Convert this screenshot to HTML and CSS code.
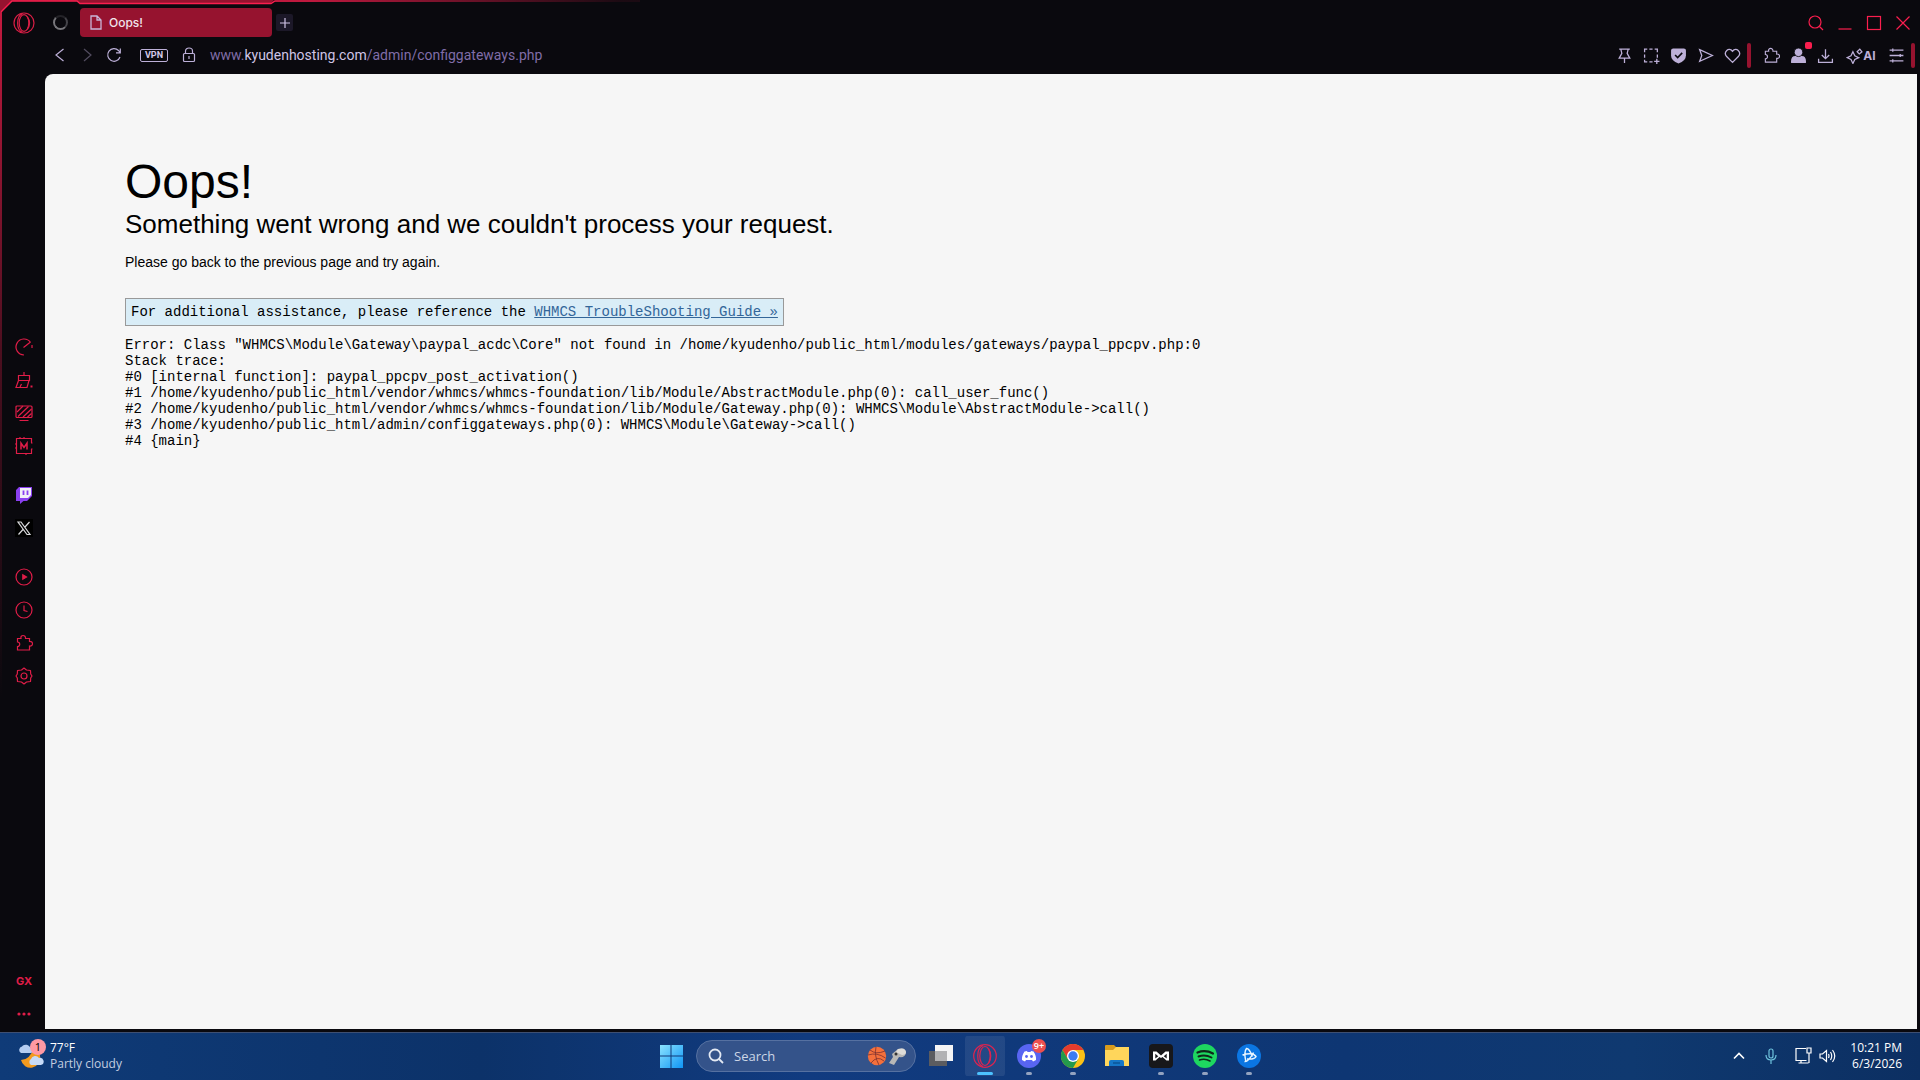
FILE: index.html
```
<!DOCTYPE html>
<html lang="en">
<head>
<meta charset="UTF-8">
<meta name="viewport" content="width=device-width, initial-scale=1.0">
<title>Oops!</title>
<link rel="stylesheet" href="styles.css">
</head>
<body>

<div class="browser">
    <!-- Glowing window edge -->
    <svg class="edge" viewBox="0 0 640 700" fill="none">
        <defs>
            <linearGradient id="edgeTop" gradientUnits="userSpaceOnUse" x1="0" y1="0" x2="620" y2="0">
                <stop offset="0.5" stop-color="#fa1e4e"/>
                <stop offset="1" stop-color="#fa1e4e" stop-opacity="0.1"/>
            </linearGradient>
            <linearGradient id="edgeSide" gradientUnits="userSpaceOnUse" x1="0" y1="0" x2="0" y2="700">
                <stop offset="0" stop-color="#c81a40"/>
                <stop offset="0.5" stop-color="#c81a40" stop-opacity="0.35"/>
                <stop offset="1" stop-color="#c81a40" stop-opacity="0"/>
            </linearGradient>
        </defs>
        <path d="M0 0H274L271 3H80L77 1H12L1 12H0Z" fill="#96132f"/>
        <path d="M1 12L12 1H77L80 3.5H271L275 1H640" stroke="url(#edgeTop)" stroke-width="1.4"/>
        <path d="M0 12H2V700H0Z" fill="url(#edgeSide)"/>
    </svg>

    <!-- Sidebar -->
    <nav class="sidebar">
        <button class="opera" aria-label="Opera menu">
            <svg width="22" height="22" viewBox="0 0 22 22" fill="none" stroke="#d81e45" stroke-width="1.2"><circle cx="11" cy="11" r="10"/><ellipse cx="11" cy="11" rx="4.8" ry="8.4"/><path d="M9.500 1.600C3 4 3 18 9.500 20.400M14.300 4.500c2.800 4 2.800 9 0 13"/></svg>
        </button>
        <div class="side-group">
            <button aria-label="GX Control">
                <svg viewBox="0 0 18 18"><path d="M9 17A8 8 0 1 1 15.500 4.300M17 7V10M8.500 9.500L15.500 4"/></svg>
            </button>
            <button aria-label="GX Cleaner">
                <svg viewBox="0 0 18 18"><path d="M9 1V4M3.500 4.500H14.500V9.500H3.500ZM3.500 9.500L1 16.500H12L14 9.500M5 16L6.500 13"/><path d="M15.500 15.500H17.500" stroke-width="2"/></svg>
            </button>
            <button aria-label="Live wallpaper">
                <svg viewBox="0 0 18 18"><rect x="1" y="2" width="16" height="11.500" rx="1"/><path d="M2 8L8 2M3 12.500L13.500 2.500M8 13L16.500 5M12.500 13L16.500 9.500M4.500 16.500H13.500"/></svg>
            </button>
            <button aria-label="GX Mods">
                <svg viewBox="0 0 18 18"><path d="M16.500 6V1.500H1.500V16.500H16.500V12M0 7H1.500M0 11H1.500M5 0V1.500M9 0V1.500M17.500 6H16M17.500 12H16M11 18V16.500"/><path d="M6 12.500V6.200L9 10.500L12 6.200V12.500" stroke-width="1.500"/></svg>
            </button>
        </div>
        <div class="side-group">
            <button aria-label="Twitch">
                <svg viewBox="0 0 18 18"><path d="M1 4L4 1H17V10L12 15H8.500L5 18V15H1Z" fill="#8a3ff0" stroke="none"/><path d="M5 2H16V9L13 12H5Z" fill="#f1eef8" stroke="none"/><path d="M8.500 4.500V9M12.500 4.500V9" stroke="#8a3ff0" stroke-width="1.800"/></svg>
            </button>
            <button class="x-app" aria-label="X">
                <svg viewBox="0 0 18 18"><path d="M3 3H6L15 15.500H12ZM14.500 3L10 8M8 10.500L3.500 15.500"/></svg>
            </button>
        </div>
        <div class="side-group">
            <button aria-label="Player">
                <svg viewBox="0 0 18 18"><circle cx="9" cy="9" r="8"/><path d="M7.800 6.800L11.500 9L7.800 11.200Z" fill="#e01d48"/></svg>
            </button>
            <button aria-label="History">
                <svg viewBox="0 0 18 18"><circle cx="9" cy="9" r="8"/><path d="M9 4.500V9.500L12.500 10.500"/></svg>
            </button>
            <button aria-label="Extensions">
                <svg viewBox="0 0 18 18"><path d="M2.500 4.500H6C5 0.500 11 0.500 10.500 4.500H14.500V7.500C18.500 7 18.500 12.500 14.500 12V16H2.500V12.500C5.500 12.500 5.500 8 2.500 8Z"/></svg>
            </button>
            <button aria-label="Settings">
                <svg viewBox="0 0 18 18"><path d="M9 1L11.500 3L15.500 3.500L15.700 7L17 9L15.700 11L15.500 14.500L11.500 15L9 17L6.500 15L2.500 14.500L2.300 11L1 9L2.300 7L2.500 3.500L6.500 3Z" stroke-linejoin="round"/><circle cx="9" cy="9" r="3"/></svg>
            </button>
        </div>
        <div class="side-group side-bottom">
            <button class="gx">GX</button>
            <button aria-label="More">
                <svg viewBox="0 0 18 18"><g fill="#e01d48" stroke="none"><circle cx="4" cy="9" r="1.600"/><circle cx="9" cy="9" r="1.600"/><circle cx="14" cy="9" r="1.600"/></g></svg>
            </button>
        </div>
    </nav>

    <div class="main">
        <!-- Tabs -->
        <div class="tab-row">
            <span class="spinner"></span>
            <button class="tab">
                <svg width="12" height="15" viewBox="0 0 12 15" fill="none" stroke="#c9b6d8" stroke-width="1.300"><path d="M1 1H7L11 5V14H1ZM7 1V5H11"/></svg>
                Oops!
            </button>
            <button class="new-tab" aria-label="New tab">
                <svg width="10" height="10" viewBox="0 0 10 10" stroke="#cfc4e6" stroke-width="1.200"><path d="M5 0V10M0 5H10"/></svg>
            </button>
            <div class="window-buttons">
                <button aria-label="Search tabs"><svg viewBox="0 0 16 16"><circle cx="7" cy="7" r="6"/><path d="M11.500 11.500L15 15"/></svg></button>
                <button aria-label="Minimize"><svg viewBox="0 0 16 16"><path d="M1.500 14H14.500"/></svg></button>
                <button aria-label="Maximize"><svg viewBox="0 0 16 16"><rect x="1.500" y="1.500" width="13" height="13"/></svg></button>
                <button aria-label="Close"><svg viewBox="0 0 16 16"><path d="M1.500 1.500L14.500 14.500M14.500 1.500L1.500 14.500"/></svg></button>
            </div>
        </div>

        <!-- Address bar -->
        <div class="address-row">
            <button aria-label="Back"><svg viewBox="0 0 16 16"><path d="M11.500 2L4 8L11.500 14"/></svg></button>
            <button class="disabled" aria-label="Forward"><svg viewBox="0 0 16 16"><path d="M5 2L12 8L5 14"/></svg></button>
            <button aria-label="Reload"><svg viewBox="0 0 16 16"><path d="M14 10A6.300 6.300 0 1 1 12.500 3.500L14 5.500M14.300 1.500V5.800H10"/></svg></button>
            <button class="vpn">VPN</button>
            <button class="lock" aria-label="Site information"><svg viewBox="0 0 16 16"><rect x="2.500" y="6.500" width="11" height="8" rx="1"/><path d="M4.500 6.500V4C4.500 0 11.500 0 11.500 4V6.500M8 9V12"/></svg></button>
            <div class="url" role="textbox" aria-label="Address" contenteditable="true" spellcheck="false">www.<span>kyudenhosting.com</span>/admin/configgateways.php</div>
            <div class="tools">
                <button aria-label="Pin"><svg viewBox="0 0 16 16"><path d="M3 2H13M4.500 2L5.500 6L3 10.500H13L10.500 6L11.500 2M8 10.500V15"/></svg></button>
                <button aria-label="Snapshot"><svg viewBox="0 0 16 16"><path d="M1.500 5V2H4M6 2H9M11 2H13.500V5M13.500 7V10M1.500 7V10M1.500 12V14H4M6 14H9M13 11V16M10.500 13.500H15.500"/></svg></button>
                <button aria-label="Ad blocker"><svg viewBox="0 0 16 16"><path d="M1 3Q1 1.500 3 1.500H13Q15 1.500 15 3V8Q15 13 8 15.500Q1 13 1 8Z" fill="#bdb0d8" stroke="none"/><path d="M4.800 7.500L7.200 10L11.500 5.500" stroke="#0a090e" stroke-width="1.500"/></svg></button>
                <button aria-label="Send page"><svg viewBox="0 0 16 16"><path d="M2.500 2.500L14.500 8L2.500 13.500L4.500 8Z"/></svg></button>
                <button aria-label="Bookmark"><svg viewBox="0 0 16 16"><path d="M8 14.500L2.500 9C-1 5 4.500 -0.500 8 4C11.500 -0.500 17 5 13.500 9Z"/></svg></button>
                <span class="bar"></span>
                <button aria-label="Extensions"><svg viewBox="0 0 18 18"><path d="M2.500 4.500H6C5 0.500 11 0.500 10.500 4.500H14.500V7.500C18.500 7 18.500 12.500 14.500 12V16H2.500V12.500C5.500 12.500 5.500 8 2.500 8Z"/></svg></button>
                <button class="profile" aria-label="Profile"><svg viewBox="0 0 16 16"><path d="M1 13.500Q1 8.500 5 8.500H11Q15 8.500 15 13.500V15H1Z" fill="#bdb0d8" stroke="none"/><circle cx="8" cy="5" r="4" fill="#bdb0d8" stroke="#0a090e" stroke-width="0.800"/></svg></button>
                <button aria-label="Downloads"><svg viewBox="0 0 16 16"><path d="M8 2V11M4.500 7.500L8 11L11.500 7.500M1.500 11V14.500H14.500V11"/></svg></button>
                <button class="ai"><svg viewBox="0 0 16 16"><path d="M6.500 4.500L8.300 8.200L12 10L8.300 11.800L6.500 15.500L4.700 11.800L1 10L4.700 8.200ZM10.500 4.500L13 2L15 4.500L12.500 6.500Z"/></svg>AI</button>
                <button aria-label="Easy setup"><svg viewBox="0 0 16 16"><path d="M1.500 3H14.500M1.500 8H14.500M1.500 13H14.500M4.500 1.500V4.500M11.500 6.500V9.500M4.500 11.500V14.500"/></svg></button>
                <span class="bar"></span>
            </div>
        </div>

        <!-- Page -->
        <main class="page">
            <h1>Oops!</h1>
            <h2>Something went wrong and we couldn't process your request.</h2>
            <p>Please go back to the previous page and try again.</p>
            <p class="help">For additional assistance, please reference the <a href="#">WHMCS TroubleShooting Guide »</a></p>
            <pre>Error: Class "WHMCS\Module\Gateway\paypal_acdc\Core" not found in /home/kyudenho/public_html/modules/gateways/paypal_ppcpv.php:0
Stack trace:
#0 [internal function]: paypal_ppcpv_post_activation()
#1 /home/kyudenho/public_html/vendor/whmcs/whmcs-foundation/lib/Module/AbstractModule.php(0): call_user_func()
#2 /home/kyudenho/public_html/vendor/whmcs/whmcs-foundation/lib/Module/Gateway.php(0): WHMCS\Module\AbstractModule-&gt;call()
#3 /home/kyudenho/public_html/admin/configgateways.php(0): WHMCS\Module\Gateway-&gt;call()
#4 {main}</pre>
        </main>
    </div>
</div>

<!-- Taskbar -->
<footer class="taskbar">
    <button class="weather">
        <span class="weather-icon">
            <svg width="26" height="26" viewBox="0 0 26 26"><path d="M16 4A9 9 0 0 1 22 13A9 9 0 0 1 3 17Q12 17 16 4Z" fill="#f39a1e"/><path d="M3 10a3.500 3.500 0 0 1 1-6.500a5 5 0 0 1 8.500 1.500a2.500 2.500 0 0 1 0 5z" fill="#b4cdf2"/><path d="M13 22a3.500 3.500 0 0 1 0-6a4.500 4.500 0 0 1 8-1a3.500 3.500 0 0 1 2 7z" fill="#c6daf7"/></svg>
            <span class="badge pink">1</span>
        </span>
        <span class="weather-text"><span>77°F</span><span class="dim">Partly cloudy</span></span>
    </button>

    <div class="apps">
        <button class="app" aria-label="Start">
            <svg viewBox="0 0 24 24"><defs><linearGradient id="win" x1="0" y1="0" x2="1" y2="1"><stop offset="0" stop-color="#8be3ff"/><stop offset="1" stop-color="#0f95f5"/></linearGradient></defs><path d="M1 1H11.500V11.500H1ZM12.500 1H24V11.500H12.500ZM1 12.500H11.500V24H1ZM12.500 12.500H24V24H12.500Z" fill="url(#win)"/></svg>
        </button>
        <label class="search">
            <svg width="16" height="16" viewBox="0 0 16 16" fill="none" stroke="#e3e9f3" stroke-width="1.800"><circle cx="7" cy="7" r="5.500"/><path d="M11 11L15 15"/></svg>
            <input type="text" placeholder="Search" aria-label="Search">
            <svg width="40" height="20" viewBox="0 0 40 20"><circle cx="10" cy="10" r="9.200" fill="#f4703c"/><path d="M1 9Q10 6 18.500 12M9 1Q7 10 12 19M3 4Q9 9 18 5M4 17Q10 9 17 15" fill="none" stroke="#7a3030" stroke-width="0.800"/><path d="M25 8L31 3Q39 1 39 7Q38 12 32 11L27 19L22 17L26 11Z" fill="#b9b8b6"/><path d="M31 3Q39 1 39 7Q38 9 35 9L29 6Z" fill="#dedcd8"/><circle cx="29" cy="8" r="1.500" fill="#333"/></svg>
        </label>
        <button class="app" aria-label="Task view">
            <svg viewBox="0 0 24 24"><rect x="0" y="7" width="18" height="15" fill="#5b5c60"/><rect x="6" y="1" width="18" height="16" fill="#f4f4f5"/><rect x="6" y="7" width="12" height="10" fill="#b2b2b4"/></svg>
        </button>
        <button class="app active" aria-label="Opera GX">
            <svg viewBox="0 0 24 24" fill="none" stroke="#dc2450" stroke-width="1.200"><circle cx="12" cy="12" r="11.300"/><ellipse cx="12" cy="12" rx="5.200" ry="9.500"/><path d="M10 1.500C3 4 3 20 10 22.500M15.500 4.500c3 4 3 11 0 15"/></svg>
        </button>
        <button class="app running" aria-label="Discord">
            <svg viewBox="0 0 24 24"><circle cx="12" cy="12" r="12" fill="#5865f2"/><path d="M7.500 7.500L10 7L10.500 8H13.500L14 7L16.500 7.500Q19.500 12 19 16L16 17.500L15 16H9L8 17.500L5 16Q4.500 12 7.500 7.500Z" fill="#fff"/><circle cx="9.500" cy="12.500" r="1.400" fill="#5865f2"/><circle cx="14.500" cy="12.500" r="1.400" fill="#5865f2"/></svg>
            <span class="badge red">9+</span>
        </button>
        <button class="app running" aria-label="Chrome">
            <svg viewBox="0 0 24 24"><circle cx="12" cy="12" r="12" fill="#fbc116"/><path d="M1.600 6A12 12 0 0 1 22.400 6H12L6.800 15Z" fill="#e33b2e"/><path d="M1.600 6L6.800 15L12 18L12 24A12 12 0 0 1 1.600 6Z" fill="#249a4c"/><path d="M12 24L17.200 15L12 17L6.800 15Z" fill="#249a4c"/><circle cx="12" cy="12" r="6" fill="#fff"/><circle cx="12" cy="12" r="4.700" fill="#3c7cf0"/></svg>
        </button>
        <button class="app" aria-label="File Explorer">
            <svg viewBox="0 0 24 24"><path d="M0 2Q0 1 1 1H9L11 3V8H0Z" fill="#d89b1c"/><path d="M0 6H8L11 3H24V22H0Z" fill="#ffd65b"/><path d="M4 22V18Q4 16 6 16H17Q19 16 19 18V22Z" fill="#1677c8"/><path d="M8 19H15" stroke="#0b5597" stroke-width="1.500"/></svg>
        </button>
        <button class="app running" aria-label="Mod manager">
            <svg viewBox="0 0 24 24"><rect width="24" height="24" rx="4" fill="#17171a"/><path d="M4 7.500H7.500L12 11.500L16.500 7.500H20V16.500H17.500L13.500 13L12 14L10.500 13L6.500 16.500H4Z" fill="#fff"/><path d="M6.300 9.800L9.300 12.200L6.300 14.500ZM17.700 9.800L14.700 12.200L17.700 14.500Z" fill="#17171a"/></svg>
        </button>
        <button class="app running" aria-label="Spotify">
            <svg viewBox="0 0 24 24" fill="none" stroke="#10261a" stroke-linecap="round"><circle cx="12" cy="12" r="12" fill="#1ed760" stroke="none"/><path d="M4.500 8.500Q12.500 5.500 20 9.500" stroke-width="2.200"/><path d="M5.500 12.500Q12 10 18.500 13.500" stroke-width="1.900"/><path d="M6.500 16Q12 14 17 17" stroke-width="1.600"/></svg>
        </button>
        <button class="app running" aria-label="Battle.net">
            <svg viewBox="0 0 24 24" fill="none" stroke="#e8f5ff" stroke-width="1.500"><circle cx="12" cy="12" r="12" fill="#0b76e3" stroke="none"/><path d="M9 18Q6.500 8 9.500 4.500Q12 4 15.500 12.500M5.500 11Q16 8 19 12.500Q18 15.500 10 15M7.500 17.500Q11 18.500 16.500 8.500"/></svg>
        </button>
    </div>

    <div class="tray">
        <button aria-label="Hidden icons"><svg width="12" height="12" viewBox="0 0 12 12"><path d="M1 8.500L6 3.500L11 8.500" stroke-width="1.600"/></svg></button>
        <button class="mic" aria-label="Microphone"><svg width="12" height="16" viewBox="0 0 12 16"><rect x="4" y="1" width="4" height="9" rx="2"/><path d="M1 7Q1 12 6 12Q11 12 11 7M6 12V16"/></svg></button>
        <button class="network" aria-label="Network and volume">
            <svg width="17" height="17" viewBox="0 0 17 17"><path d="M11 1.500H1V13.500H11.500M6 13.500V16M3.500 16H13.500M12 1H16V6H12ZM14 6V16"/></svg>
            <svg width="17" height="16" viewBox="0 0 17 16"><path d="M1 6H3.500L7.500 2.500V13.500L3.500 10H1ZM9.500 6Q10.500 8 9.500 10M11.500 4Q14 8 11.500 12M13.500 2Q18 8 13.500 14"/></svg>
        </button>
        <button class="clock"><span>10:21 PM</span><span>6/3/2026</span></button>
    </div>
</footer>

</body>
</html>
```
FILE: styles.css
```
* {
    box-sizing: border-box;
}
body {
    margin: 0;
    height: 100vh;
    display: flex;
    flex-direction: column;
    background-color: #0a090e;
    font-family: Roboto, sans-serif;
}
button {
    display: flex;
    align-items: center;
    justify-content: center;
    padding: 0;
    border: none;
    background: none;
    font-family: inherit;
    color: inherit;
    cursor: pointer;
}
.browser {
    position: relative;
    flex: 1;
    display: flex;
    min-height: 0;
}
.edge {
    position: absolute;
    top: 0;
    left: 0;
    width: 640px;
    height: 700px;
    pointer-events: none;
}

/* Sidebar */
.sidebar {
    width: 45px;
    padding: 6px 0 2px 3px;
    display: flex;
    flex-direction: column;
    align-items: center;
}
.opera {
    height: 33px;
    margin-bottom: 275px;
}
.side-group {
    margin-top: 16px;
}
.side-group button {
    width: 33px;
    height: 33px;
}
.side-group svg {
    width: 18px;
    height: 18px;
    fill: none;
    stroke: #e01d48;
    stroke-width: 1.2;
}
.side-group .x-app svg {
    stroke: #d9d9dc;
    background-color: #000;
}
.side-bottom {
    margin-top: auto;
}
.side-group .gx {
    color: #e01d48;
    font-family: Inter, sans-serif;
    font-size: 11px;
    font-weight: 700;
}

/* Tabs */
.main {
    flex: 1;
    display: flex;
    flex-direction: column;
    min-width: 0;
    padding: 0 3px 3px 0;
}
.tab-row {
    height: 37px;
    padding-top: 8px;
    display: flex;
    align-items: center;
}
.spinner {
    width: 15px;
    height: 15px;
    margin: 0 12px 0 8px;
    border: 2px solid #77767b;
    border-top-color: #242328;
    border-right-color: #444349;
    border-radius: 50%;
}
.tab {
    width: 192px;
    height: 29px;
    padding-left: 10px;
    gap: 7px;
    justify-content: flex-start;
    border-radius: 4px;
    background-color: #96132f;
    color: #f0e4ec;
    font-family: Inter, sans-serif;
    font-size: 12px;
    font-weight: 500;
}
.new-tab {
    width: 17px;
    height: 17px;
    margin-left: 4px;
    border-radius: 2px;
    background-color: #1c1828;
}
.window-buttons {
    margin-left: auto;
    display: flex;
}
.window-buttons button {
    width: 29px;
    height: 29px;
}
.window-buttons svg {
    width: 16px;
    height: 16px;
    fill: none;
    stroke: #fa1e4e;
    stroke-width: 1.2;
}

/* Address bar */
.address-row {
    height: 37px;
    padding: 0 2px 1px 1px;
    display: flex;
    align-items: center;
}
.address-row button {
    width: 27px;
    height: 27px;
}
.address-row svg {
    width: 16px;
    height: 16px;
    fill: none;
    stroke: #bdb0d8;
    stroke-width: 1.2;
}
.address-row .disabled {
    opacity: 0.4;
}
.address-row .vpn {
    width: 28px;
    height: 13px;
    margin: 0 7px 0 13px;
    border: 1px solid #bdb0d8;
    border-radius: 2px;
    color: #d3c8e8;
    font-size: 9px;
    font-weight: 700;
}
.url {
    margin-left: 8px;
    flex: 1;
    color: #806da8;
    font-size: 14px;
    outline: none;
}
.url span {
    color: #cfc4e6;
}
.tools {
    display: flex;
    align-items: center;
}
.address-row .tools svg {
    width: 17px;
    height: 17px;
}
.bar {
    width: 4px;
    height: 25px;
    border-radius: 2px;
    background-color: #96132f;
}
.tools button + .bar {
    margin-left: 1px;
}
.bar + button {
    margin-left: 7px;
}
.profile {
    position: relative;
}
.profile::after {
    content: "";
    position: absolute;
    top: 0;
    right: 0;
    width: 7px;
    height: 7px;
    border-radius: 2px;
    background-color: #fa1e4e;
}
.address-row .ai {
    width: 44px;
    color: #bdb0d8;
    font-family: Inter, sans-serif;
    font-size: 12px;
    font-weight: 700;
}

/* Page */
.page {
    flex: 1;
    padding: 81px 80px;
    overflow: auto;
    border-radius: 8px 0 0 0;
    background-color: #f6f6f6;
    color: #000;
    font-family: "Liberation Sans", Arial, sans-serif;
    font-size: 14px;
}
h1 {
    margin: 0;
    font-size: 48px;
    line-height: 54px;
    font-weight: 400;
}
h2 {
    margin: 0;
    font-size: 26px;
    line-height: 30px;
    font-weight: 400;
}
.page p {
    margin: 15px 0 28px;
    line-height: 16px;
}
.page .help {
    width: fit-content;
    margin: 0 0 11px;
    padding: 5px;
    border: 1px solid #999;
    background-color: #d9edf7;
    font-family: "Liberation Mono", "Courier New", monospace;
}
.help a {
    color: #336699;
}
pre {
    margin: 0;
    font-family: "Liberation Mono", "Courier New", monospace;
    font-size: 14px;
    line-height: 16px;
}

/* Taskbar */
.taskbar {
    height: 48px;
    padding: 0 18px 2px;
    display: grid;
    grid-template-columns: 1fr auto 1fr;
    align-items: center;
    border-top: 1px solid #3e4f72;
    background: linear-gradient(90deg, #0f3b78, #0c3269 25%, #113b80 42%, #0e3673 70%, #0f3970 85%, #0c2f62);
    color: #fff;
    font-family: "Open Sans", sans-serif;
    font-size: 12px;
}
.weather {
    justify-self: start;
    gap: 6px;
    text-align: left;
    font-size: 12px;
}
.weather-icon {
    position: relative;
    display: flex;
}
.badge {
    position: absolute;
    display: flex;
    align-items: center;
    justify-content: center;
    border-radius: 50%;
}
.pink {
    top: -4px;
    right: -2px;
    width: 16px;
    height: 16px;
    background-color: #ff99a4;
    color: #000;
    font-size: 11px;
}
.red {
    top: 3px;
    right: 5px;
    width: 14px;
    height: 14px;
    background-color: #ed4f4f;
    font-size: 9px;
    font-weight: 600;
}
.weather-text,
.clock {
    display: flex;
    flex-direction: column;
    line-height: 16px;
}
.dim {
    color: #c3cee0;
}
.apps {
    display: flex;
    align-items: center;
}
.app {
    position: relative;
    width: 44px;
    height: 40px;
}
.app svg {
    width: 24px;
    height: 24px;
}
.active {
    border-radius: 4px;
    background: linear-gradient(#ffffff14, #ffffff14) content-box;
    padding: 0 2px;
}
.running::after,
.active::after {
    content: "";
    position: absolute;
    bottom: 1px;
    left: 19px;
    width: 6px;
    height: 3px;
    border-radius: 2px;
    background-color: #93a3c0;
}
.active::after {
    left: 14px;
    width: 16px;
    background-color: #4cc2ff;
}
.search {
    width: 220px;
    height: 32px;
    margin: 0 3px;
    padding: 0 8px 0 11px;
    display: flex;
    align-items: center;
    gap: 10px;
    border: 1px solid #5671a1;
    border-radius: 16px;
    background-color: #34538a;
}
.search input {
    flex: 1;
    min-width: 0;
    padding: 0;
    border: none;
    outline: none;
    background: none;
    color: #fff;
    font-family: inherit;
    font-size: 13px;
}
.search input::placeholder {
    color: #ccd6e6;
}
.tray {
    justify-self: end;
    display: flex;
    align-items: center;
}
.tray svg {
    fill: none;
    stroke: #fff;
    stroke-width: 1.2;
}
.tray button {
    width: 32px;
    height: 40px;
}
.tray .mic svg {
    stroke: #6fc4de;
}
.tray .network {
    width: 56px;
    gap: 7px;
}
.tray .clock {
    width: 59px;
    align-items: flex-end;
    font-size: 12px;
    white-space: nowrap;
}
```
